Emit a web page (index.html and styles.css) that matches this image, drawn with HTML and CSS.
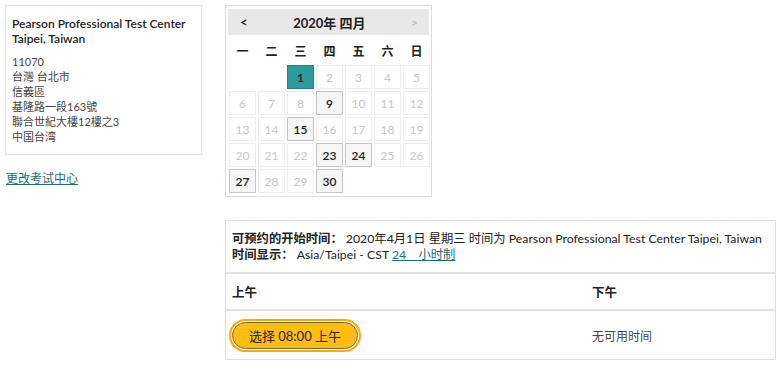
FILE: index.html
```html
<!DOCTYPE html>
<html lang="zh">
<head>
<meta charset="utf-8">
<link rel="stylesheet" href="styles.css">
</head>
<body>
<div class="page">
  <div class="left">
    <div class="center-box">
      <div class="center-name">Pearson Professional Test Center<br>Taipei, Taiwan</div>
      <div class="center-addr">11070<br>台灣 台北市<br>信義區<br>基隆路一段163號<br>聯合世紀大樓12樓之3<br>中国台湾</div>
    </div>
    <a class="change-link" href="#">更改考试中心</a>
  </div>
  <div class="right">
    <div class="calendar">
      <div class="cal-head">
        <span class="prev">&lt;</span>
        <span class="title">2020年 四月</span>
        <span class="next">&gt;</span>
      </div>
      <table class="cal-table">
        <thead>
          <tr><th>一</th><th>二</th><th>三</th><th>四</th><th>五</th><th>六</th><th>日</th></tr>
        </thead>
        <tbody>
          <tr><td class="empty"></td><td class="empty"></td><td class="day sel">1</td><td class="day off">2</td><td class="day off">3</td><td class="day off">4</td><td class="day off">5</td></tr>
          <tr><td class="day off">6</td><td class="day off">7</td><td class="day off">8</td><td class="day on">9</td><td class="day off">10</td><td class="day off">11</td><td class="day off">12</td></tr>
          <tr><td class="day off">13</td><td class="day off">14</td><td class="day on">15</td><td class="day off">16</td><td class="day off">17</td><td class="day off">18</td><td class="day off">19</td></tr>
          <tr><td class="day off">20</td><td class="day off">21</td><td class="day off">22</td><td class="day on">23</td><td class="day on">24</td><td class="day off">25</td><td class="day off">26</td></tr>
          <tr><td class="day on">27</td><td class="day off">28</td><td class="day off">29</td><td class="day on">30</td><td class="empty"></td><td class="empty"></td><td class="empty"></td></tr>
        </tbody>
      </table>
    </div>
    <div class="times">
      <div class="times-info">
        <div class="info-line"><span class="lbl">可预约的开始时间：</span> 2020年4月1日 星期三 时间为 Pearson Professional Test Center Taipei, Taiwan</div>
        <div class="info-line"><span class="lbl">时间显示：</span> Asia/Taipei - CST <a class="fmt" href="#">24　小时制</a></div>
      </div>
      <div class="times-row head-row">
        <div class="col-am">上午</div>
        <div class="col-pm">下午</div>
      </div>
      <div class="times-row slot-row">
        <div class="col-am"><button class="slot">选择 08:00 上午</button></div>
        <div class="col-pm none">无可用时间</div>
      </div>
    </div>
  </div>
</div>
</body>
</html>
```
FILE: styles.css
```css
* { box-sizing: border-box; }
html, body { margin: 0; padding: 0; background: #fff; }
body {
  font-family: Lato, "Noto Sans CJK SC", sans-serif;
  font-size: 12px;
  color: #333;
}
.page {
  display: flex;
  padding: 5px;
  gap: 23px;
}
.left { width: 197px; flex: none; }
.center-box {
  border: 1px solid #e4e4e4;
  padding: 10px 6px 10px 6px;
  line-height: 15px;
  font-size: 11px;
}
.center-name { font-weight: 600; color: #222; font-size: 12px; }
.center-addr { margin-top: 8px; color: #444; }
.change-link {
  display: inline-block;
  margin-top: 14px;
  margin-left: 1px;
  color: #1d6d70;
  font-size: 12px;
  text-decoration: underline;
}
.right { width: 551px; flex: none; }
.calendar {
  width: 207px;
  border: 1px solid #dcdcdc;
  padding: 1px;
}
.cal-head {
  margin: 2px 1px 0 1px;
  height: 26px;
  background: #e8e8e8;
  display: flex;
  align-items: center;
  justify-content: space-between;
  padding: 0 11px 0 12px;
  font-weight: 700;
  color: #222;
}
.cal-head .title { font-size: 13px; }
.cal-head .prev { font-size: 13px; }
.cal-head .next { color: #b5b5b5; font-weight: 400; font-size: 12px; }
.cal-table {
  border-collapse: separate;
  border-spacing: 2px;
  width: 205px;
  table-layout: fixed;
}
.cal-table th {
  height: 26px;
  font-weight: 700;
  font-size: 12px;
  color: #222;
  padding: 0;
}
.cal-table td {
  width: 27px;
  height: 24px;
  padding: 0;
  text-align: center;
  font-size: 12px;
}
.day.off { border: 1px solid #ececec; color: #c6c6c6; }
.day.on { border: 1px solid #c5c5c5; background: #f6f6f6; color: #222; font-weight: 600; }
.day.sel { border: 1px solid #1f8285; background: #2b9b9d; color: #1a1a1a; font-weight: 600; }
.times {
  margin-top: 23px;
  border: 1px solid #dedede;
}
.times-info {
  padding: 10px 6px 9px 6px;
  color: #222;
  font-size: 12.3px;
}
.info-line { height: 16px; line-height: 16px; white-space: nowrap; }
.lbl { font-weight: 600; }
.fmt { color: #1d6d70; text-decoration: underline; }
.times-row {
  display: grid;
  grid-template-columns: 360px 1fr;
  border-top: 2px solid #e2e2e2;
}
.head-row { height: 37px; align-items: center; color: #222; font-size: 12.5px; font-weight: 600; }
.head-row .col-pm { font-weight: 700; }
.head-row .col-am, .head-row .col-pm { padding-left: 6px; }
.slot-row { height: 50px; }
.slot-row .col-am { padding: 9px 0 0 4px; }
.slot-row .col-pm { padding-left: 6px; display: flex; align-items: center; color: #444; }
.slot {
  width: 126px;
  height: 27px;
  margin: 2px;
  border: 1px solid #6f6240;
  border-radius: 14px;
  background: #ffbe0f;
  outline: 2px solid #ffa800;
  outline-offset: 1px;
  font-family: Lato, "Noto Sans CJK SC", sans-serif;
  font-size: 13px;
  color: #222;
  padding: 0;
}
```
